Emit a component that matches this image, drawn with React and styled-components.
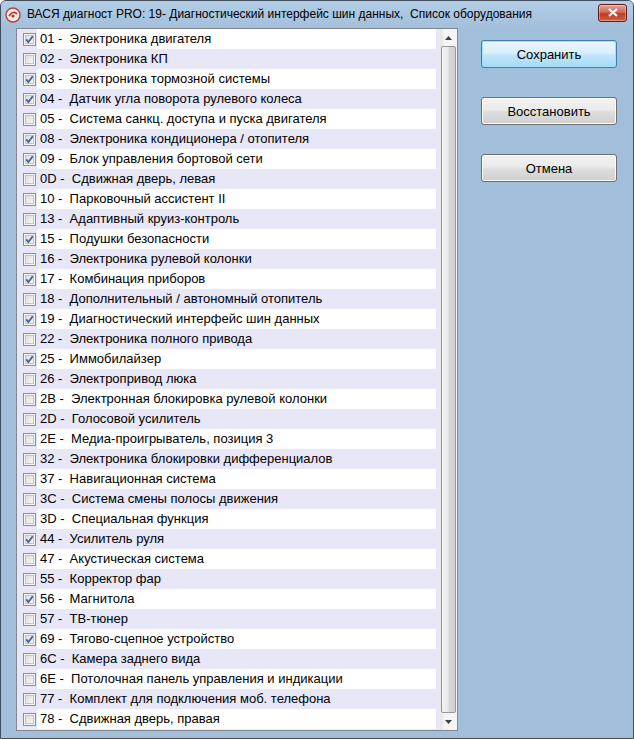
import React from 'react';
import styled, { createGlobalStyle } from 'styled-components';

const items = [
    ['01', 'Электроника двигателя', true],
    ['02', 'Электроника КП', false],
    ['03', 'Электроника тормозной системы', true],
    ['04', 'Датчик угла поворота рулевого колеса', true],
    ['05', 'Система санкц. доступа и пуска двигателя', false],
    ['08', 'Электроника кондиционера / отопителя', true],
    ['09', 'Блок управления бортовой сети', true],
    ['0D', 'Сдвижная дверь, левая', false],
    ['10', 'Парковочный ассистент II', false],
    ['13', 'Адаптивный круиз-контроль', false],
    ['15', 'Подушки безопасности', true],
    ['16', 'Электроника рулевой колонки', false],
    ['17', 'Комбинация приборов', true],
    ['18', 'Дополнительный / автономный отопитель', false],
    ['19', 'Диагностический интерфейс шин данных', true],
    ['22', 'Электроника полного привода', false],
    ['25', 'Иммобилайзер', true],
    ['26', 'Электропривод люка', false],
    ['2B', 'Электронная блокировка рулевой колонки', false],
    ['2D', 'Голосовой усилитель', false],
    ['2E', 'Медиа-проигрыватель, позиция 3', false],
    ['32', 'Электроника блокировки дифференциалов', false],
    ['37', 'Навигационная система', false],
    ['3C', 'Система смены полосы движения', false],
    ['3D', 'Специальная функция', false],
    ['44', 'Усилитель руля', true],
    ['47', 'Акустическая система', false],
    ['55', 'Корректор фар', false],
    ['56', 'Магнитола', true],
    ['57', 'ТВ-тюнер', false],
    ['69', 'Тягово-сцепное устройство', true],
    ['6C', 'Камера заднего вида', false],
    ['6E', 'Потолочная панель управления и индикации', false],
    ['77', 'Комплект для подключения моб. телефона', false],
    ['78', 'Сдвижная дверь, правая', false],
];

const GlobalStyle = createGlobalStyle`
    html, body {
        margin: 0;
        padding: 0;
        background: #ffffff;
    }
`;

const CheckBox = ({ checked }) => (
    <Box>
        <svg width="13" height="13" viewBox="0 0 13 13">
            <defs>
                <linearGradient id="cbg" x1="0" y1="0" x2="1" y2="1">
                    <stop offset="0" stopColor="#dcdcdc" />
                    <stop offset="1" stopColor="#f8f8f8" />
                </linearGradient>
            </defs>
            <rect x="0.5" y="0.5" width="12" height="12" fill="#f4f4f4" stroke="#8f8f8f" />
            <rect x="2.5" y="2.5" width="8" height="8" fill="url(#cbg)" stroke="#c4c4c4" />
            {checked && (
                <path d="M3.2 6.4 L5.4 9 L9.8 3.2" fill="none" stroke="#4a5f97" strokeWidth="1.8" />
            )}
        </svg>
    </Box>
);

const Arrow = ({ down }) => (
    <svg width="7" height="4" viewBox="0 0 7 4">
        <path d={down ? 'M0 0 L7 0 L3.5 4 Z' : 'M0 4 L7 4 L3.5 0 Z'} fill="#3e3e3e" />
    </svg>
);

const App = () => {
    return (
        <>
            <GlobalStyle />
            <Window>
                <TitleBar>
                    <AppIcon>
                        <svg width="16" height="16" viewBox="0 0 16 16">
                            <circle cx="8" cy="8" r="7" fill="#fbeaea" stroke="#b9443d" strokeWidth="1.5" />
                            <path d="M4 9 Q8 3 12 7" fill="none" stroke="#c2352b" strokeWidth="1.8" />
                            <circle cx="8" cy="9" r="1.6" fill="#c2352b" />
                        </svg>
                    </AppIcon>
                    <Title>ВАСЯ диагност PRO: 19- Диагностический интерфейс шин данных,  Список оборудования</Title>
                    <CloseButton>
                        <svg width="10" height="9" viewBox="0 0 10 9">
                            <path d="M1 1 L9 8 M9 1 L1 8" stroke="#ffffff" strokeWidth="2.2" />
                        </svg>
                    </CloseButton>
                </TitleBar>
                <Body>
                    <ListBox>
                        <Rows>
                            {items.map(([code, name, checked], i) => (
                                <Row key={code}>
                                    <CheckBox checked={checked} />
                                    <Label $white={i % 2 === 0}>{`${code} -  ${name}`}</Label>
                                </Row>
                            ))}
                        </Rows>
                        <ScrollBar>
                            <ScrollButton><Arrow /></ScrollButton>
                            <Thumb />
                            <ScrollButton><Arrow down /></ScrollButton>
                        </ScrollBar>
                    </ListBox>
                    <Side>
                        <Button $primary>Сохранить</Button>
                        <Button>Восстановить</Button>
                        <Button>Отмена</Button>
                    </Side>
                </Body>
            </Window>
        </>
    );
};

export default App;

const Window = styled.div`
    width: 634px;
    height: 739px;
    box-sizing: border-box;
    background: #a1bedb;
    border: 1px solid #3f4d5c;
    border-radius: 6px 6px 0 0;
    display: flex;
    flex-direction: column;
    font-family: "Liberation Sans", Arial, sans-serif;
    overflow: hidden;
`;

const TitleBar = styled.div`
    height: 27px;
    flex: none;
    display: flex;
    align-items: center;
    padding: 0 5px 0 4px;
    background: linear-gradient(#b3cde6, #a3bfdb);
`;

const AppIcon = styled.div`
    width: 16px;
    height: 16px;
    display: flex;
    margin-right: 6px;
`;

const Title = styled.div`
    flex: 1;
    font-family: "Liberation Sans", Arial, sans-serif;
    font-size: 12px;
    color: #000;
    white-space: pre;
    padding-bottom: 1px;
`;

const CloseButton = styled.div`
    width: 29px;
    height: 18px;
    margin-right: 1px;
    margin-top: -4px;
    box-sizing: border-box;
    border: 1px solid #5e1d17;
    border-radius: 3px;
    background: linear-gradient(#e3a596 0%, #d1695a 45%, #bf3a28 55%, #d0603f 100%);
    display: flex;
    align-items: center;
    justify-content: center;
    box-shadow: inset 0 0 0 1px rgba(255, 255, 255, 0.35);
`;

const Body = styled.div`
    flex: 1;
    display: flex;
    padding: 0 0 7px 15px;
`;

const ListBox = styled.div`
    width: 442px;
    height: 703px;
    box-sizing: border-box;
    border: 1px solid #828790;
    background: #e7e7f7;
    display: flex;
`;

const Rows = styled.div`
    flex: 1;
    padding-right: 4px;
`;

const Row = styled.div`
    height: 20px;
    display: flex;
    align-items: center;
    padding-left: 6px;
`;

const Box = styled.div`
    width: 13px;
    height: 13px;
    display: flex;
    flex: none;
`;

const Label = styled.div`
    flex: 1;
    height: 20px;
    line-height: 20px;
    margin-left: 1px;
    padding-left: 3px;
    background: ${(p) => (p.$white ? '#ffffff' : 'transparent')};
    font-size: 13px;
    color: #000;
    white-space: pre;
`;

const ScrollBar = styled.div`
    width: 17px;
    flex: none;
    display: flex;
    flex-direction: column;
    background: linear-gradient(90deg, #e4e4e4, #f4f4f4 30%, #f4f4f4);
`;

const ScrollButton = styled.div`
    height: 17px;
    display: flex;
    align-items: center;
    justify-content: center;
`;

const Thumb = styled.div`
    flex: 1;
    margin: 0 1px;
    border: 1px solid #979797;
    border-radius: 2px;
    background: linear-gradient(90deg, #f3f3f3, #e9e9e9 45%, #d6d6d6 55%, #cfcfcf);
`;

const Side = styled.div`
    display: flex;
    flex-direction: column;
    gap: 29px;
    padding: 12px 0 0 23px;
`;

const Button = styled.div`
    width: 136px;
    height: 28px;
    box-sizing: border-box;
    border: 1px solid ${(p) => (p.$primary ? '#3c7fb1' : '#707070')};
    border-radius: 3px;
    background: ${(p) =>
        p.$primary
            ? 'linear-gradient(#eaf6fd 0%, #d9f0fc 45%, #bee6fd 55%, #a7d9f5 100%)'
            : 'linear-gradient(#f2f2f2 0%, #ebebeb 45%, #dddddd 55%, #cfcfcf 100%)'};
    box-shadow: inset 0 0 0 1px ${(p) => (p.$primary ? '#9fe2f7' : '#fcfcfc')};
    display: flex;
    align-items: center;
    justify-content: center;
    font-size: 13px;
    color: #000;
`;
